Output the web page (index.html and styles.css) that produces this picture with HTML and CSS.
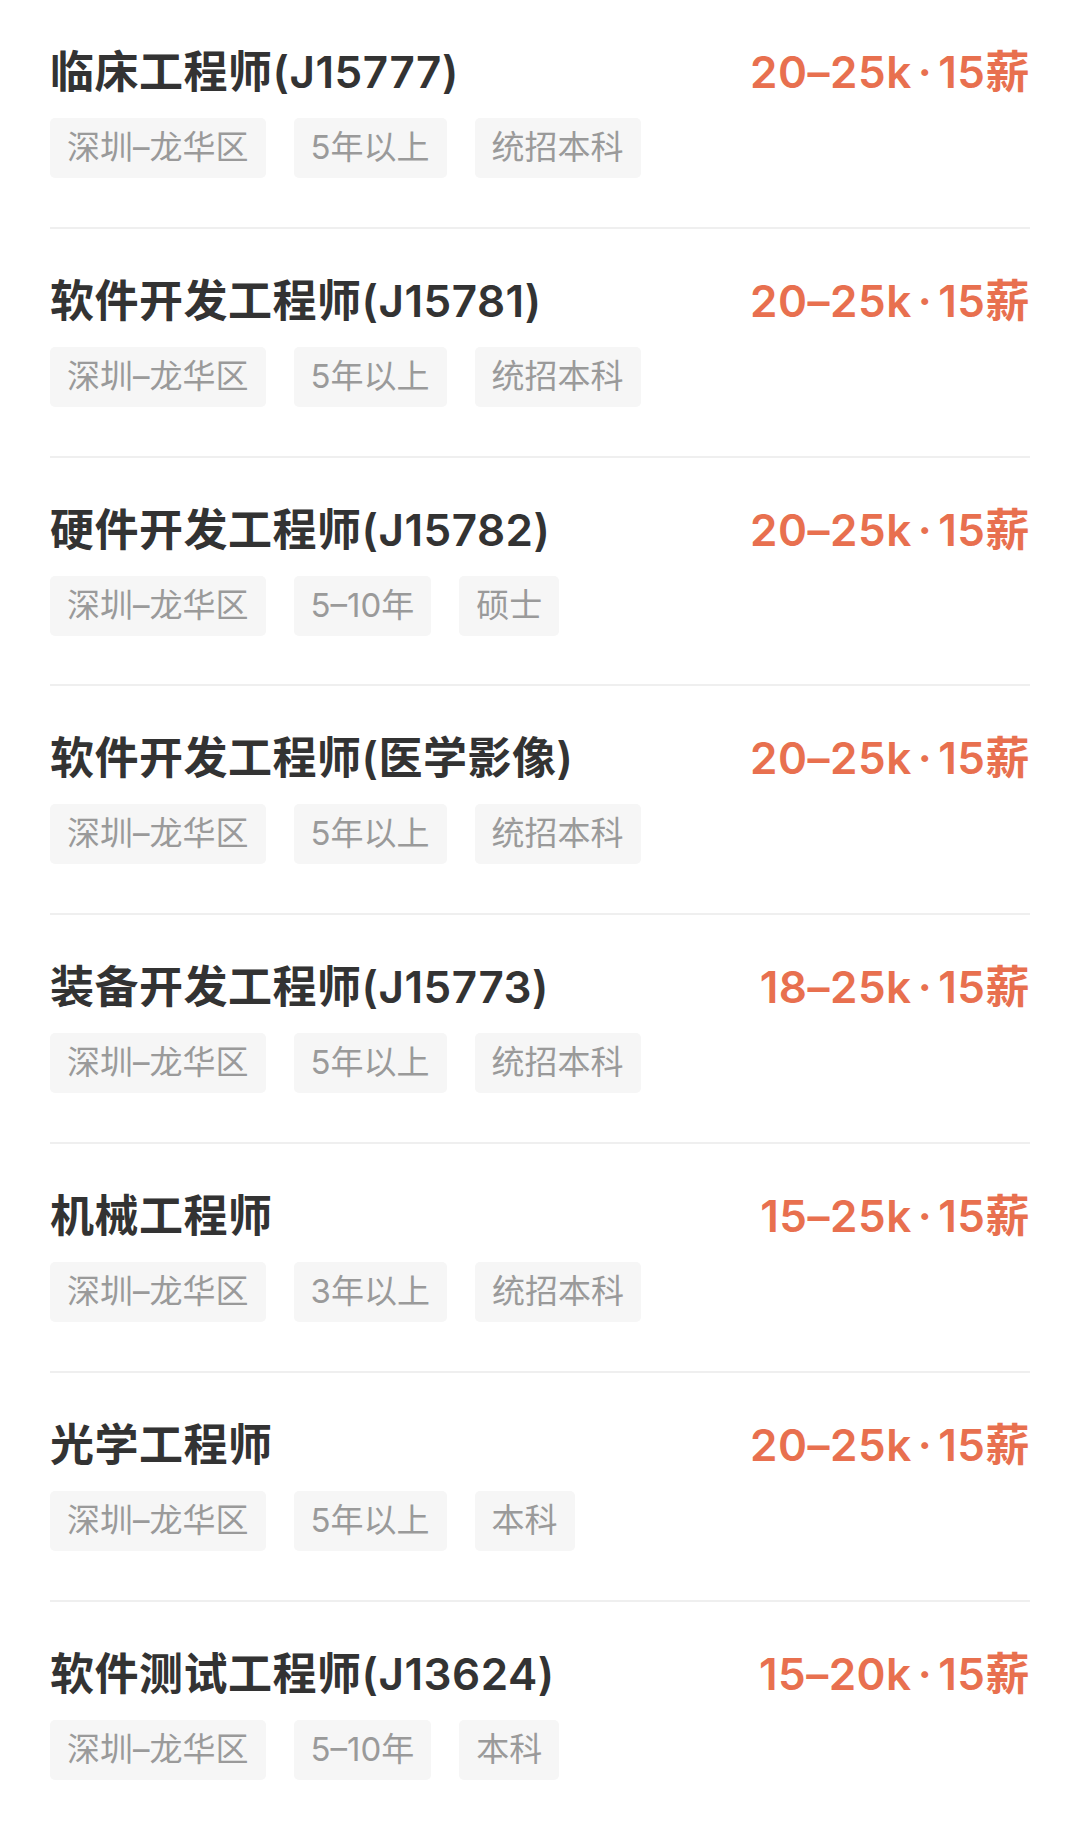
FILE: index.html
```html
<!DOCTYPE html>
<html lang="zh-CN">
<head>
<meta charset="utf-8">
<title>职位列表</title>
<link rel="stylesheet" href="styles.css">
</head>
<body>
<main class="list">
  <section class="job">
    <div class="job-head"><h2 class="title">临床工程师(J15777)</h2><span class="salary">20–25k<span class="dot">·</span>15薪</span></div>
    <div class="tags"><span class="tag">深圳–龙华区</span><span class="tag">5年以上</span><span class="tag">统招本科</span></div>
  </section>
  <section class="job">
    <div class="job-head"><h2 class="title">软件开发工程师(J15781)</h2><span class="salary">20–25k<span class="dot">·</span>15薪</span></div>
    <div class="tags"><span class="tag">深圳–龙华区</span><span class="tag">5年以上</span><span class="tag">统招本科</span></div>
  </section>
  <section class="job">
    <div class="job-head"><h2 class="title">硬件开发工程师(J15782)</h2><span class="salary">20–25k<span class="dot">·</span>15薪</span></div>
    <div class="tags"><span class="tag">深圳–龙华区</span><span class="tag">5–10年</span><span class="tag">硕士</span></div>
  </section>
  <section class="job">
    <div class="job-head"><h2 class="title">软件开发工程师(医学影像)</h2><span class="salary">20–25k<span class="dot">·</span>15薪</span></div>
    <div class="tags"><span class="tag">深圳–龙华区</span><span class="tag">5年以上</span><span class="tag">统招本科</span></div>
  </section>
  <section class="job">
    <div class="job-head"><h2 class="title">装备开发工程师(J15773)</h2><span class="salary">18–25k<span class="dot">·</span>15薪</span></div>
    <div class="tags"><span class="tag">深圳–龙华区</span><span class="tag">5年以上</span><span class="tag">统招本科</span></div>
  </section>
  <section class="job">
    <div class="job-head"><h2 class="title">机械工程师</h2><span class="salary">15–25k<span class="dot">·</span>15薪</span></div>
    <div class="tags"><span class="tag">深圳–龙华区</span><span class="tag">3年以上</span><span class="tag">统招本科</span></div>
  </section>
  <section class="job">
    <div class="job-head"><h2 class="title">光学工程师</h2><span class="salary">20–25k<span class="dot">·</span>15薪</span></div>
    <div class="tags"><span class="tag">深圳–龙华区</span><span class="tag">5年以上</span><span class="tag">本科</span></div>
  </section>
  <section class="job">
    <div class="job-head"><h2 class="title">软件测试工程师(J13624)</h2><span class="salary">15–20k<span class="dot">·</span>15薪</span></div>
    <div class="tags"><span class="tag">深圳–龙华区</span><span class="tag">5–10年</span><span class="tag">本科</span></div>
  </section>
</main>
</body>
</html>
```
FILE: styles.css
```css
html, body {
  margin: 0;
  padding: 0;
  background: #ffffff;
}

body {
  font-family: "Inter", "Noto Sans CJK SC", sans-serif;
  -webkit-font-smoothing: antialiased;
}

.list {
  padding: 0 50px;
}

.job {
  padding-top: 44px;
  padding-bottom: 48.8px;
  border-bottom: 2px solid #efefef;
}

.job-head {
  display: flex;
  justify-content: space-between;
  align-items: center;
  height: 56px;
}

.title {
  margin: 0;
  font-size: 44px;
  line-height: 56px;
  font-weight: 600;
  letter-spacing: 0.5px;
  color: #333333;
}

.salary {
  font-size: 44px;
  line-height: 56px;
  font-weight: 600;
  letter-spacing: 0.5px;
  color: #e8704f;
  white-space: nowrap;
}

.dot {
  margin: 0 6px;
}

.tags {
  display: flex;
  gap: 28px;
  margin-top: 18px;
}

.tag {
  height: 60px;
  line-height: 58px;
  padding: 0 17px;
  background: #f6f6f6;
  border-radius: 5px;
  color: #9a9a9a;
  font-size: 33px;
}
```
